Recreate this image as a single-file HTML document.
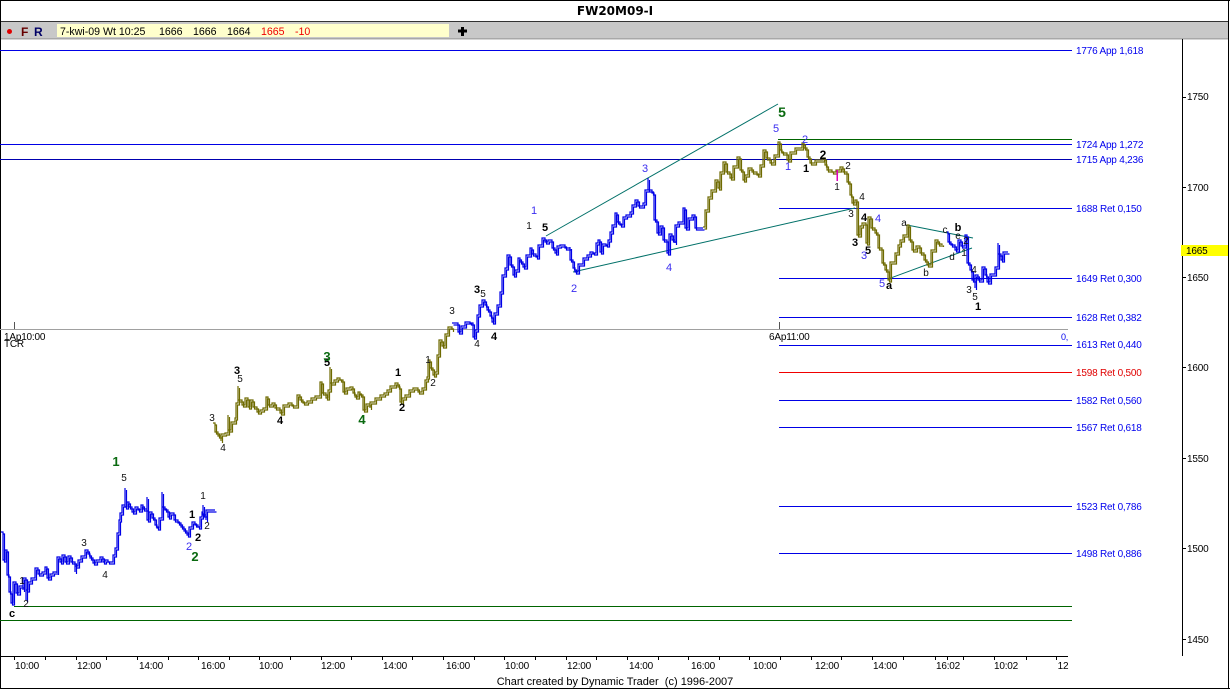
<!DOCTYPE html>
<html><head><meta charset="utf-8"><style>
html,body{margin:0;padding:0;background:#fff;overflow:hidden}
svg{display:block;font-family:"Liberation Sans",sans-serif}
.t{font-size:10px;fill:#000;letter-spacing:-.2px}
.f{font-size:10px;fill:#0000ee;letter-spacing:-.2px}
.w text,.w{text-anchor:middle}
.k{font-size:10px;fill:#111}
.b{font-size:11px;fill:#000;font-weight:bold}
.u{font-size:11px;fill:#3a2df0}
.g{font-size:13px;fill:#0a6a10;font-weight:bold}
.pb{fill:none;stroke:#0000e6;stroke-width:1.2}
.po{fill:none;stroke:#6e6a00;stroke-width:1.2}
</style></head><body>
<svg width="1230" height="689" viewBox="0 0 1230 689" xmlns="http://www.w3.org/2000/svg">
<rect width="1230" height="689" fill="#fff"/>
<!-- frame -->
<rect x="0" y="0" width="1230" height="1" fill="#000"/>
<rect x="0" y="0" width="1" height="689" fill="#000"/>
<rect x="0" y="688" width="1230" height="1" fill="#000"/>
<rect x="1228" y="0" width="1" height="689" fill="#000"/>
<text x="615" y="15" text-anchor="middle" style="font-size:12px;font-weight:bold;font-family:'DejaVu Sans',sans-serif">FW20M09-I</text>
<!-- toolbar -->
<rect x="1" y="21" width="1227" height="1" fill="#333"/>
<rect x="1" y="22" width="1227" height="16" fill="#c8c8c8"/>
<rect x="1" y="38" width="1227" height="1.5" fill="#a8a8a8"/>
<rect x="57" y="24" width="392" height="13" fill="#ffffcc"/>
<circle cx="9.5" cy="31.5" r="2.5" fill="#e00000"/>
<text x="21" y="36" style="font-size:12px;font-weight:bold;fill:#660000">F</text>
<text x="34" y="36" style="font-size:12px;font-weight:bold;fill:#000066">R</text>
<g style="font-size:10.6px">
<text x="60" y="35">7-kwi-09 Wt 10:25</text>
<text x="159" y="35">1666</text><text x="193" y="35">1666</text><text x="227" y="35">1664</text>
<text x="261" y="35" fill="#f00000">1665</text><text x="295" y="35" fill="#f00000">-10</text>
</g>
<path d="M458 31h9M462.5 27v9" stroke="#000" stroke-width="3"/>
<!-- levels -->
<g fill="none" shape-rendering="crispEdges" stroke-width="1">
<path d="M0 50.5H1072M0 144.5H1072M779 208.5H1072M779 278.5H1072M779 317.5H1072M779 345.5H1072M779 400.5H1072M779 427.5H1072M779 506.5H1072M779 553.5H1072" stroke="#0000e6"/>
<path d="M0 159.5H1072" stroke="#0000b0"/>
<path d="M779 372.5H1072" stroke="#f00000"/>
<path d="M778 139.5H1072M14 606.5H1072M0 620.5H1072" stroke="#006400"/>
<path d="M0 329.5H1068" stroke="#a0a0a0"/>
<path d="M14.5 322V329M779.5 322V329" stroke="#555"/>
</g>
<!-- trend lines -->
<g stroke="#007068" stroke-width="1" fill="none">
<path d="M546 236L778 104M573 272L855 208M888 279L972 248M907 225L973 238"/>
</g>
<!-- blue price 1 -->
<g>
<g id="p1"><path class="pb" d="M1 532H3V560H5V550H7V575H9V592H11V603H13V582H16V593H19V586H23V590V578H26V600V590H28V582H31V578H35V573V568H38V574H42V572H45V567H47V578H50V574H53V572H57V573V557H60V562H62V555H65V562H68V556H71V562H75V572V566H78V560H81V556H85V550H88V554H90V558H93V563H96V560H100V557H103V562H105V560H108V562H113V555H115V548H117V533H119V520H120V513H122V505H125V488V507H127V502H129V507H132V512H135V507H138V510H141V505H143V509H147V497V520H149V512H152V518H155V525H157V528H159V518H162V492V507H165V510H168V517H170V513H174V520H178V523H181V527H184V531H187V535H189V527H192V522H195V525H198V527H200V517H202V512H203V505V515H206V520V510H215"/></g>
<use href="#p1" transform="translate(1.5,2)"/>
</g>
<!-- olive 1 -->
<g>
<g id="p2"><path class="po" d="M213 423H215V432H218V436H221V441V434H225V433H228V415V430H231V422H235V418H236V403H238V386V400H242V405H245V398H248V407H250V400H253V407H257V412H260V410H263V408H266V397H268V405H272V403H275V408H280V413H283V405H288V403H292V406H297V395H300V400H303V403H307V401H311V398H315V396H320V382H322V393H326V398H328V390H330V367V383H334V380H337V378H340V380H343V392H346V388H350V387H353V393H355V397H358V392H360V395H363V410H366V404H370V408V402H375V398H380V395H384V393H387V390H390V386H395V383H398V387H400V402H402V398H405V395H409V390H413V388H418V392H422V388H425V380H427V377H428V360H430V368H433V375H435V372H437V370V355H439V340H442V346H445V334H448V327H452V330"/></g>
<use href="#p2" transform="translate(1.5,2)"/>
</g>
<!-- blue 2 -->
<g>
<g id="p3"><path class="pb" d="M452 323H458V332H461V326H465V322H470V323H473V337H475V330H477V315H479V305H482V300H485V305H487V310H490V316H492V322H494V313H497V305H500V292H502V275H505V268H507V255H510V265H513V275H515V270H518V258H520V262H523V267H526V255H530V248H532V254H536V257H538V245H542V238H545V242H548V240H552V248H555V253H557V246H560V245H565V248H570V247V260H573V268H575V272H578V264H583V258H587V255H590V252H593V253H596V243H598V240H600V252H602V244H606V245H608V240H610V232H612V225H615V213H617V222H620V225H623V217H626V215H630V212H632V205H635V200H638V206H643V203H645V190H648V178V190H652V193H654V220H657V233H660V226H663V240H667V253H669V234H672V240H675V243V225H678V222H683V208H685V228H688V218H692V215H695V228H703"/></g>
<use href="#p3" transform="translate(1.5,2)"/>
</g>
<!-- olive 2 -->
<g>
<g id="p4"><path class="po" d="M703 227H705V210H708V197H711V190H715V180H718V188H720V172H723V162H726V172H730V178H733V166H737V157H740V170H743V180H745V175H748V168H752V172H757V175H760V165H763V150H766V158H770V163H774V155H778V142H780V150H782V153H787V160H790V152H795V148H802V143H804V148H807V157H810V163H815V160H823V158H825V165H827V170H832V172H836V170H840V167H843V172H847V182H850V195H852V203H855V200H857V235H860V226H862V223H866V243H868V217H871V228H875V233H878V248H882V263H885V270H888V280H890V262H895V253H898V245H900V240H903V235H907V225H909V240H912V250H916V246H920V253H924V260H927V265H931V250H935V240H938V244H942V245"/></g>
<use href="#p4" transform="translate(1.5,2)"/>
</g>
<!-- blue 3 -->
<g>
<g id="p5"><path class="pb" d="M947 232H948V242H951V245H955V250H958V240H961V246H965V235H967V263H970V270H972V280H975V288V275H978V280H982V267H985V275H987V282H990V274H995V267H998V243V254H1001V260H1003V252H1008"/></g>
<use href="#p5" transform="translate(1.5,2)"/>
</g>
<rect x="836.5" y="170" width="1.5" height="11" fill="#e000c0"/>
<!-- axis -->
<rect x="1182" y="39" width="1" height="617" fill="#000"/>
<path d="M1182 97.5h4M1182 187.5h4M1182 277.5h4M1182 367.5h4M1182 458.5h4M1182 548.5h4M1182 639.5h4" stroke="#000" shape-rendering="crispEdges"/>
<g class="t">
<text x="1187" y="100">1750</text><text x="1187" y="191">1700</text><text x="1187" y="281">1650</text><text x="1187" y="371">1600</text><text x="1187" y="462">1550</text><text x="1187" y="552">1500</text><text x="1187" y="643">1450</text>
</g>
<rect x="1181" y="245" width="47" height="11" fill="#ffff00"/>
<text x="1186" y="254" class="t">1665</text>
<!-- fib labels -->
<g class="f">
<text x="1076" y="54">1776 App 1,618</text>
<text x="1076" y="148">1724 App 1,272</text>
<text x="1076" y="163">1715 App 4,236</text>
<text x="1076" y="212">1688 Ret 0,150</text>
<text x="1076" y="282">1649 Ret 0,300</text>
<text x="1076" y="321">1628 Ret 0,382</text>
<text x="1076" y="348">1613 Ret 0,440</text>
<text x="1076" y="376" fill="#e00000" style="fill:#e00000">1598 Ret 0,500</text>
<text x="1076" y="404">1582 Ret 0,560</text>
<text x="1076" y="431">1567 Ret 0,618</text>
<text x="1076" y="510">1523 Ret 0,786</text>
<text x="1076" y="557">1498 Ret 0,886</text>
<text x="1061" y="340" style="font-size:9px">0,</text>
</g>
<!-- time axis -->
<rect x="0" y="656" width="1068" height="1" fill="#000"/>
<path stroke="#000" shape-rendering="crispEdges" d="M14.5 656v4M45.5 656v4M76.5 656v4M106.5 656v4M137.5 656v4M168.5 656v4M198.5 656v4M229.5 656v4M259.5 656v4M290.5 656v4M321.5 656v4M351.5 656v4M382.5 656v4M412.5 656v4M443.5 656v4M474.5 656v4M504.5 656v4M535.5 656v4M566.5 656v4M596.5 656v4M627.5 656v4M658.5 656v4M688.5 656v4M719.5 656v4M749.5 656v4M780.5 656v4M811.5 656v4M841.5 656v4M872.5 656v4M903.5 656v4M935.5 656v4M947.5 656v4M963.5 656v4M994.5 656v4M1026.5 656v4M1056.5 656v4"/>
<g class="t w">
<text x="27" y="669">10:00</text><text x="89" y="669">12:00</text><text x="151" y="669">14:00</text><text x="213" y="669">16:00</text>
<text x="271" y="669">10:00</text><text x="333" y="669">12:00</text><text x="395" y="669">14:00</text><text x="458" y="669">16:00</text>
<text x="517" y="669">10:00</text><text x="579" y="669">12:00</text><text x="641" y="669">14:00</text><text x="703" y="669">16:00</text>
<text x="765" y="669">10:00</text><text x="827" y="669">12:00</text><text x="885" y="669">14:00</text><text x="948" y="669">16:02</text>
<text x="1006" y="669">10:02</text><text x="1063" y="669">12</text>
</g>
<text x="615" y="685" text-anchor="middle" style="font-size:11px">Chart created by Dynamic Trader &#160;(c) 1996-2007</text>
<text x="4" y="340" class="t">1Ap10:00</text><text x="4" y="347" class="t">TCR</text>
<text x="769" y="340" class="t">6Ap11:00</text>
<!-- wave labels -->
<g class="w">
<g class="k">
<text x="22" y="584">1</text><text x="26" y="607">2</text><text x="84" y="546">3</text><text x="105" y="578">4</text><text x="124" y="481">5</text>
<text x="203" y="499">1</text><text x="207" y="529">2</text>
<text x="212" y="421">3</text><text x="223" y="451">4</text><text x="240" y="382">5</text>
<text x="428" y="363">1</text><text x="433" y="386">2</text><text x="452" y="314">3</text><text x="477" y="347">4</text>
<text x="483" y="297">5</text><text x="529" y="229">1</text><text x="848" y="169">2</text><text x="837" y="190">1</text>
<text x="862" y="200">4</text><text x="851" y="217">3</text><text x="904" y="226">a</text><text x="926" y="276">b</text>
<text x="945" y="233">c</text><text x="958" y="239">e</text><text x="966" y="244">2</text><text x="952" y="260">d</text><text x="964" y="256">1</text>
<text x="974" y="273">4</text><text x="969" y="293">3</text><text x="975" y="300">5</text>
</g>
<g class="b">
<text x="12" y="617">c</text><text x="192" y="518">1</text><text x="198" y="541">2</text>
<text x="237" y="374">3</text><text x="280" y="424">4</text><text x="327" y="366">5</text>
<text x="398" y="376">1</text><text x="402" y="411">2</text><text x="494" y="340">4</text><text x="477" y="293">3</text><text x="545" y="231">5</text>
<text x="806" y="172">1</text><text x="823" y="159" style="font-size:12px">2</text><text x="864" y="221">4</text>
<text x="855" y="246">3</text><text x="868" y="254">5</text><text x="889" y="289">a</text><text x="958" y="231">b</text><text x="978" y="310">1</text>
</g>
<g class="u">
<text x="189" y="550">2</text><text x="534" y="214">1</text><text x="574" y="292">2</text><text x="669" y="271">4</text><text x="645" y="172">3</text>
<text x="776" y="132">5</text><text x="805" y="143">2</text><text x="788" y="170">1</text><text x="878" y="222">4</text><text x="864" y="259">3</text><text x="882" y="287">5</text>
</g>
<g class="g">
<text x="116" y="466">1</text><text x="195" y="561">2</text><text x="327" y="361">3</text><text x="362" y="424">4</text><text x="782" y="117" style="font-size:14px">5</text>
</g>
</g>
</svg>
</body></html>
